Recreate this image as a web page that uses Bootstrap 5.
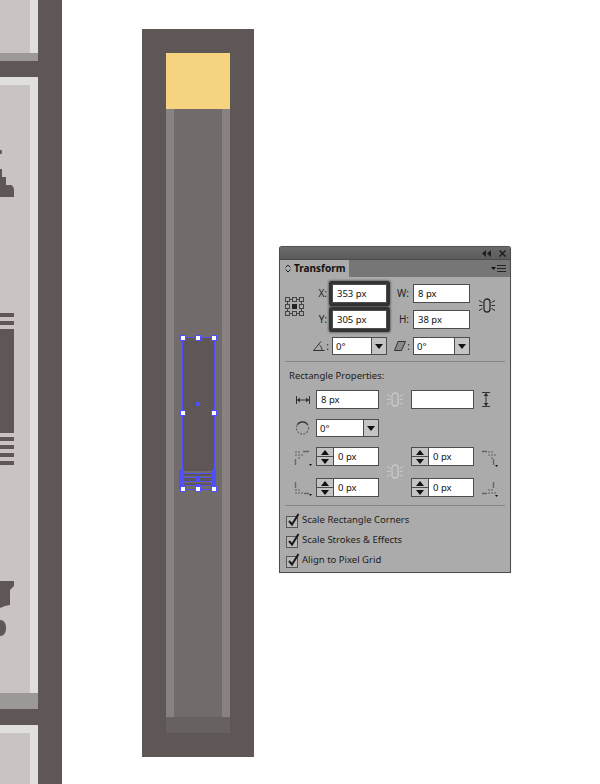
<!DOCTYPE html>
<html lang="en">
<head>
  <meta charset="UTF-8">
  <meta name="viewport" content="width=device-width, initial-scale=1.0">
  <title>Transform panel</title>
  <link href="https://cdn.jsdelivr.net/npm/bootstrap@5.3.0/dist/css/bootstrap.min.css" rel="stylesheet">
  <style>
    body { background: #fff; overflow: hidden; font-family: "Noto Sans", "Liberation Sans", sans-serif; font-size: 9.5px; color: #1c1c1c; }
    .stage { position: relative; width: 600px; height: 784px; }
    .artwork { display: block; }
    .ai-panel { position: absolute; left: 279px; top: 246px; width: 232px; height: 327px; background: #ababab; border: 1px solid #4c4c4c; border-top-color: #555; border-radius: 3px 3px 0 0; box-shadow: 0 0 1px rgba(0,0,0,.25); }
    .ai-titlebar { height: 12px; background: linear-gradient(#6a6a6a, #5c5c5c); padding-right: 4px; gap: 8px; }
    .ai-tabs { height: 18px; background: #767676; border-top: 1px solid #4a4a4a; }
    .ai-tab { width: 69px; height: 100%; background: #ababab; padding-left: 5px; gap: 3px; font-size: 10px; font-weight: 700; color: #111; }
    .ai-menu { margin-right: 4px; }
    .ai-top { grid-template-columns: 27px 20px 55px 26px 57px 1fr; grid-template-rows: 19px 20px 18px; row-gap: 7px; padding: 7px 0 0 5px; }
    .ai-props { grid-template-columns: 36px 63px 32px 63px 36px; grid-template-rows: 19px 18px 21px 19px; row-gap: 10px; }
    .ai-lbl { text-align: right; padding-right: 5px; font-size: 10px; line-height: 19px; color: #222; }
    .ai-lbl-w { padding-right: 4px; }
    .ai-lbl-angle { padding-right: 3px; gap: 1px; }
    .ai-ref { grid-row: 1 / span 2; margin-top: 13px; }
    .ai-link-top { grid-row: 1 / span 2; grid-column: 6; margin: 14px 0 0 9px; }
    .ai-link-mid { grid-row: 3 / span 2; grid-column: 3; margin: 17px 0 0 8px; }
    .ai-rule { margin: 6px 5px 0; border: 0; border-top: 1px solid #858585; opacity: 1; }
    .ai-heading { height: 14px; line-height: 14px; margin: 7px 0 7px 9px; font-size: 9.5px; }
    .ai-field.form-control { height: 19px; padding: 0 0 0 4px; border: 1px solid #4d4d4d; border-radius: 0; background: #fff; font-size: 9.5px; line-height: 17px; color: #111; box-shadow: none; }
    .ai-hot.form-control { box-shadow: 0 0 0 3px #333, 0 0 2px 4px rgba(0,0,0,.35); border-radius: 1px; }
    .ai-combo { height: 18px; }
    .ai-combo .ai-field.form-control { height: 18px; line-height: 16px; padding-left: 3px; }
    .ai-drop.btn { width: 16px; flex: none; padding: 0; border: 1px solid #4d4d4d; border-radius: 0; background: #c4c4c4; line-height: 0; }
    .ai-spin { height: 19px; }
    .ai-spin-btns { width: 18px; flex: none; }
    .ai-spin-btns .btn { height: 10px; padding: 0; border: 1px solid #4d4d4d; border-radius: 0; background: #c4c4c4; line-height: 0; }
    .ai-spin-btns .btn + .btn { margin-top: -1px; }
    .ai-checks { gap: 6px; margin: 7px 0 0 5px; }
    .ai-check { height: 14px; gap: 2px; font-size: 9.5px; color: #1c1c1c; }
    .ai-tool { margin-left: auto; margin-right: 6px; }
    .ai-corner-l { margin: 3px 4px 0 auto; }
    .ai-corner-r { margin: 3px 0 0 8px; }
    .ai-corner-low { margin-top: 2px; }
  </style>
</head>
<body>
<svg width="0" height="0" class="position-absolute">
  <symbol id="link" viewBox="0 0 16 15">
    <rect x="5" y="1" width="6" height="13" rx="3" fill="none" stroke="currentColor" stroke-width="1.3"/>
    <path d="M0 2.5l3.5 2M0 7.5h3.5M0 12.5l3.5-2M16 2.5l-3.5 2M16 7.5h-3.5M16 12.5l-3.5-2" stroke="currentColor" fill="none"/>
  </symbol>
  <symbol id="caret" viewBox="0 0 8 5"><path d="M0 0h8L4 5z" fill="#111"/></symbol>
  <symbol id="caretup" viewBox="0 0 8 5"><path d="M0 5h8L4 0z" fill="#111"/></symbol>
  <symbol id="tick" viewBox="0 0 15 15">
    <rect x="1.5" y="3.5" width="11" height="11" fill="#b9b9b9" stroke="#555"/>
    <path d="M4 8l3 3.500L13.500 1" fill="none" stroke="#1a1a1a" stroke-width="2"/>
  </symbol>
  <symbol id="corner-tl" viewBox="0 0 18 18">
    <path d="M1 1h2v2H1zM4 1h2v2H4zM1 4h2v2H1zM4 4h2v2H4zM7 4h2v2H7zM4 7h2v2H4z" fill="#858585"/>
    <path d="M9 1.500h6M1.500 9v6" stroke="#666" stroke-width="1.400" fill="none"/>
    <path d="M15 14h3l-1.500 2z" fill="#111"/>
  </symbol>
  <symbol id="corner-tr" viewBox="0 0 18 18">
    <path d="M6 1h2v2H6zM9 1h2v2H9zM6 4h2v2H6zM9 4h2v2H9zM12 4h2v2h-2zM9 7h2v2H9z" fill="#858585"/>
    <path d="M0 1.500h5M11.500 9v6" stroke="#666" stroke-width="1.400" fill="none"/>
    <path d="M13 15h3l-1.500 2z" fill="#111"/>
  </symbol>
  <symbol id="corner-bl" viewBox="0 0 18 18">
    <path d="M1 9h2v2H1zM1 12h2v2H1zM4 12h2v2H4zM7 12h2v2H7zM4 9h2v2H4z" fill="#858585"/>
    <path d="M10 13.500h5M1.500 2v6" stroke="#666" stroke-width="1.400" fill="none"/>
    <path d="M15 14h3l-1.500 2z" fill="#111"/>
  </symbol>
  <symbol id="corner-br" viewBox="0 0 18 18">
    <path d="M6 9h2v2H6zM9 9h2v2H9zM6 12h2v2H6zM9 12h2v2H9zM12 12h2v2h-2z" fill="#858585"/>
    <path d="M0 13.500h5M11.500 2v6" stroke="#666" stroke-width="1.400" fill="none"/>
    <path d="M13 15h3l-1.500 2z" fill="#111"/>
  </symbol>
</svg>
<div class="stage">
  <svg class="artwork" width="600" height="784" viewBox="0 0 600 784" shape-rendering="crispEdges">
    <rect x="0" y="0" width="62" height="784" fill="#5e5756"/>
    <rect x="0" y="0" width="38" height="53" fill="#e0dfdd"/>
    <rect x="0" y="0" width="30" height="53" fill="#c9c3c2"/>
    <rect x="0" y="53" width="38" height="8" fill="#9c9896"/>
    <rect x="0" y="77" width="38" height="616" fill="#e0dfdd"/>
    <rect x="0" y="85" width="30" height="608" fill="#c9c3c2"/>
    <rect x="0" y="693" width="38" height="16" fill="#9c9896"/>
    <rect x="0" y="725" width="38" height="59" fill="#e0dfdd"/>
    <rect x="0" y="733" width="30" height="51" fill="#c9c3c2"/>
    <g fill="#5e5756">
      <path d="M0 150h1.500l.5 2-.5 2H0z" shape-rendering="auto"/>
      <path d="M0 169h2v8h4v8h4c2.500 0 4 2 4 5v7H0z" shape-rendering="auto"/>
      <rect x="0" y="313" width="14" height="4"/>
      <rect x="0" y="321" width="14" height="4"/>
      <rect x="0" y="329" width="14" height="104"/>
      <rect x="0" y="437" width="14" height="4"/>
      <rect x="0" y="445" width="14" height="4"/>
      <rect x="0" y="453" width="14" height="4"/>
      <rect x="0" y="461" width="14" height="4"/>
      <path d="M0 581h14v5l-4 4v15l-5 1-5 2z" shape-rendering="auto"/>
      <path d="M0 620c4 0 6 3.500 6 8s-2 8-6 8z" shape-rendering="auto"/>
    </g>
    <rect x="142" y="29" width="112" height="728" fill="#5e5756"/>
    <rect x="166" y="53" width="64" height="56" fill="#f5d380"/>
    <rect x="166" y="109" width="64" height="608" fill="#716c6a"/>
    <rect x="166" y="109" width="8" height="608" fill="#888381"/>
    <rect x="222" y="109" width="8" height="608" fill="#888381"/>
    <rect x="166" y="717" width="64" height="16" fill="#676260"/>
    <g>
      <rect x="182" y="337" width="32" height="134" fill="#5e5756"/>
      <rect x="182" y="473" width="32" height="3" fill="#5e5756"/>
      <rect x="182" y="478" width="32" height="3" fill="#5e5756"/>
      <rect x="182" y="483" width="32" height="3" fill="#5e5756"/>
      <g fill="#4f4fff">
        <rect x="182" y="337" width="1" height="133"/>
        <rect x="214" y="337" width="1" height="133"/>
        <rect x="179" y="470" width="5" height="19"/>
        <rect x="211" y="470" width="5" height="19"/>
        <rect x="182" y="337" width="32" height="1"/>
        <rect x="182" y="473" width="32" height="1"/>
        <rect x="182" y="477" width="32" height="1"/>
        <rect x="182" y="481" width="32" height="1"/>
        <rect x="182" y="485" width="32" height="1"/>
        <rect x="182" y="489" width="32" height="1"/>
        <rect x="196" y="402" width="4" height="4"/>
        <rect x="196" y="476" width="4" height="5"/>
        <rect x="196" y="484" width="4" height="3"/>
      </g>
      <g fill="#fff" stroke="#4f4fff">
        <rect x="180.500" y="335.500" width="5" height="5"/>
        <rect x="195.500" y="335.500" width="5" height="5"/>
        <rect x="211.500" y="335.500" width="5" height="5"/>
        <rect x="180.500" y="410.500" width="5" height="5"/>
        <rect x="211.500" y="410.500" width="5" height="5"/>
        <rect x="180.500" y="486.500" width="5" height="5"/>
        <rect x="195.500" y="486.500" width="5" height="5"/>
        <rect x="211.500" y="486.500" width="5" height="5"/>
      </g>
    </g>
  </svg>

  <div class="ai-panel">
    <div class="ai-titlebar d-flex align-items-center justify-content-end">
      <svg width="9" height="7" viewBox="0 0 9 7"><path d="M4 0v7L0 3.500zM9 0v7L5 3.500z" fill="#1e1e1e"/></svg>
      <svg width="7" height="7" viewBox="0 0 7 7"><path d="M.5.5l6 6M6.500.5l-6 6" stroke="#1e1e1e" stroke-width="1.500"/></svg>
    </div>
    <div class="ai-tabs d-flex justify-content-between align-items-center">
      <div class="ai-tab d-flex align-items-center">
        <svg width="6" height="9" viewBox="0 0 6 9"><path d="M.5 3.500L3 1l2.500 2.500M.5 5.500L3 8l2.500-2.500" fill="none" stroke="#222"/></svg>
        <span>Transform</span>
      </div>
      <svg class="ai-menu" width="15" height="8" viewBox="0 0 15 8"><path d="M0 2h5L2.500 5z" fill="#111"/><path d="M6 .5h9M6 3.500h9M6 6.500h9" stroke="#222"/></svg>
    </div>

    <div class="ai-top d-grid">
      <svg class="ai-ref" width="19" height="19" viewBox="0 0 19 19" style="grid-column:1">
        <g fill="none" stroke="#444"><rect x=".5" y=".5" width="4" height="4"/><rect x="7.500" y=".5" width="4" height="4"/><rect x="14.500" y=".5" width="4" height="4"/><rect x=".5" y="7.500" width="4" height="4"/><rect x="14.500" y="7.500" width="4" height="4"/><rect x=".5" y="14.500" width="4" height="4"/><rect x="7.500" y="14.500" width="4" height="4"/><rect x="14.500" y="14.500" width="4" height="4"/>
          <path d="M5 2.500h2M12 2.500h2M5 16.500h2M12 16.500h2M2.500 5v2M2.500 12v2M16.500 5v2M16.500 12v2"/></g>
        <rect x="7" y="7" width="5" height="5" fill="#222"/>
      </svg>
      <div class="ai-lbl" style="grid-column:2;grid-row:1">X:</div>
      <input class="form-control ai-field ai-hot" style="grid-column:3;grid-row:1" value="353 px">
      <div class="ai-lbl ai-lbl-w" style="grid-column:4;grid-row:1">W:</div>
      <input class="form-control ai-field" style="grid-column:5;grid-row:1" value="8 px">
      <svg class="ai-link-top" width="16" height="15" style="color:#2a2a2a"><use href="#link"/></svg>

      <div class="ai-lbl" style="grid-column:2;grid-row:2">Y:</div>
      <input class="form-control ai-field ai-hot" style="grid-column:3;grid-row:2" value="305 px">
      <div class="ai-lbl ai-lbl-w" style="grid-column:4;grid-row:2">H:</div>
      <input class="form-control ai-field" style="grid-column:5;grid-row:2" value="38 px">

      <div class="d-flex align-items-center justify-content-end ai-lbl ai-lbl-angle" style="grid-column:1 / span 2;grid-row:3">
        <svg width="12" height="10" viewBox="0 0 12 10"><path d="M.5 9.500h11M.5 9.500L8 .5M6.500 4c1.500 1 2.500 3 2.500 5.500" fill="none" stroke="#333"/></svg><span>:</span>
      </div>
      <div class="input-group flex-nowrap ai-combo" style="grid-column:3;grid-row:3">
        <input class="form-control ai-field" value="0°">
        <button class="btn ai-drop" type="button"><svg width="8" height="5"><use href="#caret"/></svg></button>
      </div>
      <div class="d-flex align-items-center justify-content-end ai-lbl ai-lbl-angle ai-lbl-w" style="grid-column:4;grid-row:3">
        <svg width="12" height="10" viewBox="0 0 12 10"><path d="M4 .5h7.500l-4 9H.5z" fill="#8a8a8a" stroke="#333"/></svg><span>:</span>
      </div>
      <div class="input-group flex-nowrap ai-combo" style="grid-column:5;grid-row:3">
        <input class="form-control ai-field" value="0°">
        <button class="btn ai-drop" type="button"><svg width="8" height="5"><use href="#caret"/></svg></button>
      </div>
    </div>

    <hr class="ai-rule">
    <div class="ai-heading">Rectangle Properties:</div>

    <div class="ai-props d-grid">
      <svg class="align-self-center ai-tool" width="14" height="8" viewBox="0 0 14 8" style="grid-column:1;grid-row:1"><path d="M.5 0v8M13.500 0v8M1 4h12" stroke="#333" fill="none"/><path d="M1 4l3-2.500v5zM13 4l-3-2.500v5z" fill="#333"/></svg>
      <input class="form-control ai-field" style="grid-column:2;grid-row:1" value="8 px">
      <svg class="align-self-center ms-2" width="16" height="15" style="color:#c9c9c9;grid-column:3;grid-row:1"><use href="#link"/></svg>
      <input class="form-control ai-field" style="grid-column:4;grid-row:1" value="">
      <svg class="align-self-center ms-2" width="8" height="15" viewBox="0 0 8 15" style="grid-column:5;grid-row:1"><path d="M0 .5h8M0 14.500h8M4 1v13" stroke="#333" fill="none"/><path d="M4 1l2.500 3h-5zM4 14l2.500-3h-5z" fill="#333"/></svg>

      <svg class="align-self-center ai-tool" width="15" height="16" viewBox="0 0 16 16" style="grid-column:1;grid-row:2"><circle cx="8" cy="8" r="6.500" fill="none" stroke="#666" stroke-width="1.300" stroke-dasharray="2 1.500"/><path d="M2.500 4.500A6.500 6.500 0 0 1 13.500 4.500" fill="none" stroke="#333" stroke-width="1.200"/></svg>
      <div class="input-group flex-nowrap ai-combo" style="grid-column:2;grid-row:2">
        <input class="form-control ai-field" value="0°">
        <button class="btn ai-drop" type="button"><svg width="8" height="5"><use href="#caret"/></svg></button>
      </div>

      <svg class="ai-corner-l" width="18" height="18" style="grid-column:1;grid-row:3"><use href="#corner-tl"/></svg>
      <div class="input-group flex-nowrap ai-spin align-self-start" style="grid-column:2;grid-row:3">
        <div class="btn-group-vertical ai-spin-btns"><button class="btn" type="button"><svg width="8" height="5"><use href="#caretup"/></svg></button><button class="btn" type="button"><svg width="8" height="5"><use href="#caret"/></svg></button></div>
        <input class="form-control ai-field" value="0 px">
      </div>
      <svg class="ai-link-mid" width="16" height="15" style="color:#c9c9c9"><use href="#link"/></svg>
      <div class="input-group flex-nowrap ai-spin align-self-start" style="grid-column:4;grid-row:3">
        <div class="btn-group-vertical ai-spin-btns"><button class="btn" type="button"><svg width="8" height="5"><use href="#caretup"/></svg></button><button class="btn" type="button"><svg width="8" height="5"><use href="#caret"/></svg></button></div>
        <input class="form-control ai-field" value="0 px">
      </div>
      <svg class="ai-corner-r" width="18" height="18" style="grid-column:5;grid-row:3"><use href="#corner-tr"/></svg>

      <svg class="ai-corner-l ai-corner-low" width="18" height="18" style="grid-column:1;grid-row:4"><use href="#corner-bl"/></svg>
      <div class="input-group flex-nowrap ai-spin" style="grid-column:2;grid-row:4">
        <div class="btn-group-vertical ai-spin-btns"><button class="btn" type="button"><svg width="8" height="5"><use href="#caretup"/></svg></button><button class="btn" type="button"><svg width="8" height="5"><use href="#caret"/></svg></button></div>
        <input class="form-control ai-field" value="0 px">
      </div>
      <div class="input-group flex-nowrap ai-spin" style="grid-column:4;grid-row:4">
        <div class="btn-group-vertical ai-spin-btns"><button class="btn" type="button"><svg width="8" height="5"><use href="#caretup"/></svg></button><button class="btn" type="button"><svg width="8" height="5"><use href="#caret"/></svg></button></div>
        <input class="form-control ai-field" value="0 px">
      </div>
      <svg class="ai-corner-r ai-corner-low" width="18" height="18" style="grid-column:5;grid-row:4"><use href="#corner-br"/></svg>
    </div>

    <hr class="ai-rule mt-2">
    <div class="ai-checks d-flex flex-column">
      <label class="ai-check d-flex align-items-center"><svg width="15" height="15"><use href="#tick"/></svg>Scale Rectangle Corners</label>
      <label class="ai-check d-flex align-items-center"><svg width="15" height="15"><use href="#tick"/></svg>Scale Strokes &amp; Effects</label>
      <label class="ai-check d-flex align-items-center"><svg width="15" height="15"><use href="#tick"/></svg>Align to Pixel Grid</label>
    </div>
  </div>
</div>
<script src="https://cdn.jsdelivr.net/npm/bootstrap@5.3.0/dist/js/bootstrap.bundle.min.js"></script>
</body>
</html>
